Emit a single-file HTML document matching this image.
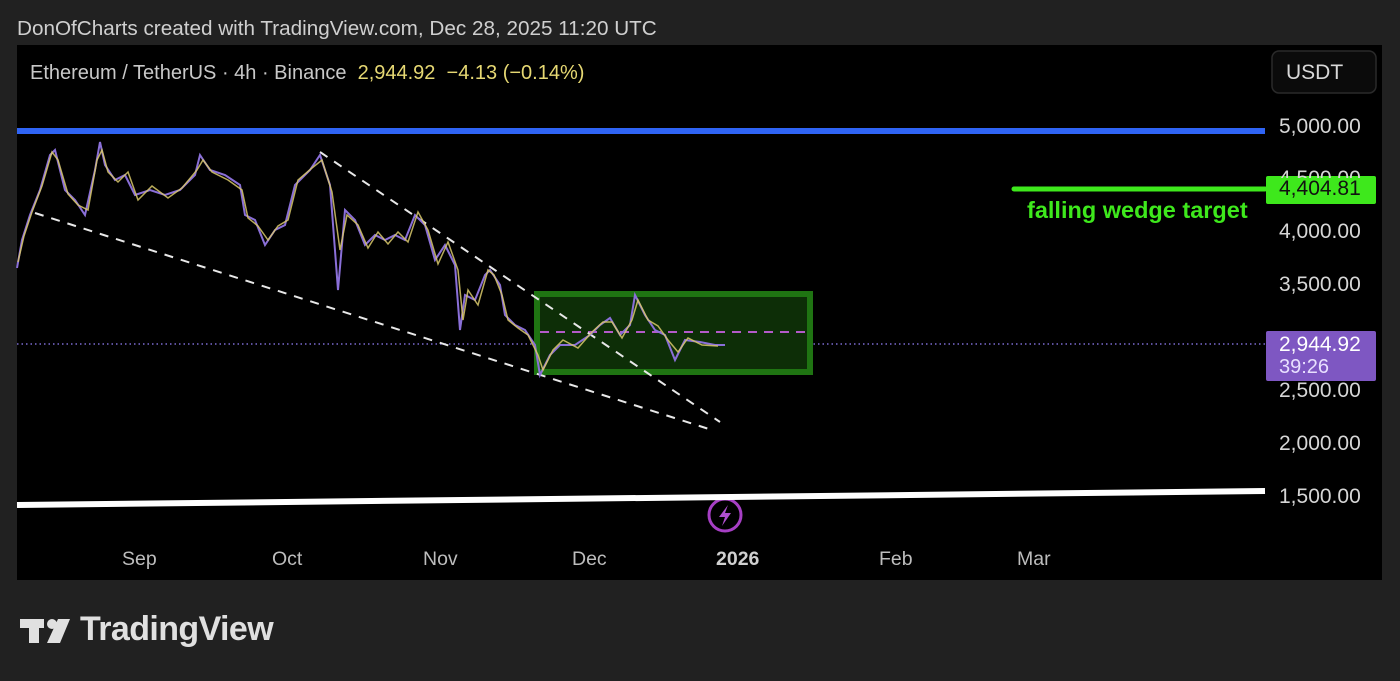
<!DOCTYPE html>
<html><head><meta charset="utf-8"><style>
html,body{margin:0;padding:0;width:1400px;height:681px;background:#212121;overflow:hidden;font-family:"Liberation Sans",sans-serif}
.t{position:absolute;color:#d6d6d6;white-space:nowrap}
.p{font-size:21px;left:1279px}
.m{font-size:19.5px;color:#bdbdbd;top:548px}
</style></head><body>
<div class="t" style="left:17px;top:17px;font-size:20.7px;color:#cfcfcf">DonOfCharts created with TradingView.com, Dec 28, 2025 11:20 UTC</div>
<svg style="position:absolute;left:0;top:0" width="1400" height="681">
<rect x="17" y="45" width="1365" height="535" fill="#000"/>
<rect x="1272" y="51" width="104" height="42" rx="7" fill="#0b0b0b" stroke="#2a2a2a" stroke-width="1.5"/>
<line x1="17" y1="131" x2="1265" y2="131" stroke="#2f64f5" stroke-width="6"/>
<line x1="1014" y1="189" x2="1265" y2="189" stroke="#3ee81c" stroke-width="5" stroke-linecap="round"/>
<line x1="17" y1="344" x2="1265" y2="344" stroke="#7a6ad0" stroke-width="1.5" stroke-dasharray="1.5 3"/>
<rect x="537" y="294" width="273" height="78" fill="#0d2e07" stroke="#1f7412" stroke-width="6"/>
<line x1="540" y1="332" x2="808" y2="332" stroke="#b35ac8" stroke-width="2" stroke-dasharray="9 7"/>
<line x1="35" y1="213" x2="712" y2="430" stroke="#e8e8e8" stroke-width="2" stroke-dasharray="9 8"/>
<line x1="320" y1="152" x2="720" y2="422" stroke="#e8e8e8" stroke-width="2" stroke-dasharray="9 8"/>
<polyline fill="none" stroke="#8a6fd8" stroke-width="2" points="17,268 22,240 30,215 40,190 50,155 55,150 65,190 75,200 85,215 95,170 100,142 105,165 115,180 125,175 135,195 150,190 165,195 180,190 195,175 200,155 210,170 225,175 240,185 245,215 255,220 265,245 275,230 285,225 295,185 310,170 320,155 330,185 338,290 345,210 355,220 365,245 375,235 385,240 395,235 405,240 415,215 425,225 435,260 445,245 455,265 460,330 465,295 475,300 485,275 490,270 500,285 505,315 515,325 525,330 535,345 540,375 550,355 560,345 575,345 590,335 600,325 610,318 620,335 630,325 635,295 645,315 655,330 665,335 675,360 685,340 700,342 715,345 725,345"/>
<polyline fill="none" stroke="#d9c96a" stroke-width="1.5" opacity="0.85" points="18,262 24,236 32,212 42,186 52,152 58,160 68,194 78,205 88,210 97,160 102,150 108,172 118,182 128,172 138,200 152,186 168,198 182,188 197,170 203,160 212,172 228,180 242,190 248,218 258,226 268,240 278,226 288,220 298,180 312,168 322,160 332,192 340,250 347,215 358,225 368,248 378,232 388,244 398,232 408,242 418,212 428,230 438,264 448,242 458,270 463,320 468,290 478,305 488,270 494,275 502,295 508,320 518,328 528,335 538,355 543,370 553,350 563,340 578,348 592,332 603,322 612,322 622,338 632,320 638,300 648,320 658,326 668,340 678,352 688,338 702,345 718,346"/>
<circle cx="725" cy="515" r="16" fill="#000" stroke="#a63fc4" stroke-width="3"/>
<path d="M728 505 L719 517 L725 517 L722 526 L731 513 L725 513 Z" fill="#b04fd0"/>
<line x1="17" y1="505" x2="1265" y2="491" stroke="#fff" stroke-width="6"/>
<rect x="1266" y="176" width="110" height="28" rx="2" fill="#3ee81c"/>
<rect x="1266" y="331" width="110" height="50" rx="2" fill="#7e57c2"/>
<g fill="#e0e0e0">
<rect x="20" y="619" width="24" height="9"/><rect x="29" y="619" width="10" height="24"/>
<circle cx="52" cy="624" r="5"/>
<polygon points="58,619 70,619 60,643 47,643"/>
</g>
</svg>
<div class="t" style="left:30px;top:62px;font-size:20px;color:#c8c8c8">Ethereum / TetherUS · 4h · Binance&nbsp; <span style="color:#e6d873">2,944.92&nbsp; −4.13 (−0.14%)</span></div>
<div class="t" style="left:1286px;top:61px;font-size:21px;color:#d8d8d8">USDT</div>
<div class="t p" style="top:115px">5,000.00</div>
<div class="t p" style="top:167px">4,500.00</div>
<div class="t p" style="top:178px;color:#111;background:#3ee81c;line-height:22px">4,404.81</div>
<div class="t p" style="top:220px">4,000.00</div>
<div class="t p" style="top:273px">3,500.00</div>
<div class="t p" style="top:333px;color:#fff">2,944.92</div>
<div class="t" style="left:1279px;top:356px;font-size:20px;color:#e8e0ff">39:26</div>
<div class="t p" style="top:379px">2,500.00</div>
<div class="t p" style="top:432px">2,000.00</div>
<div class="t p" style="top:485px">1,500.00</div>
<div class="t" style="left:1027px;top:197px;font-size:23.5px;font-weight:bold;color:#3ee81c">falling wedge target</div>
<div class="t m" style="left:122px">Sep</div>
<div class="t m" style="left:272px">Oct</div>
<div class="t m" style="left:423px">Nov</div>
<div class="t m" style="left:572px">Dec</div>
<div class="t m" style="left:716px;font-weight:bold;color:#d0d0d0">2026</div>
<div class="t m" style="left:879px">Feb</div>
<div class="t m" style="left:1017px">Mar</div>
<div class="t" style="left:80px;top:610px;font-size:34px;font-weight:bold;color:#e0e0e0;letter-spacing:-0.6px">TradingView</div>
</body></html>
